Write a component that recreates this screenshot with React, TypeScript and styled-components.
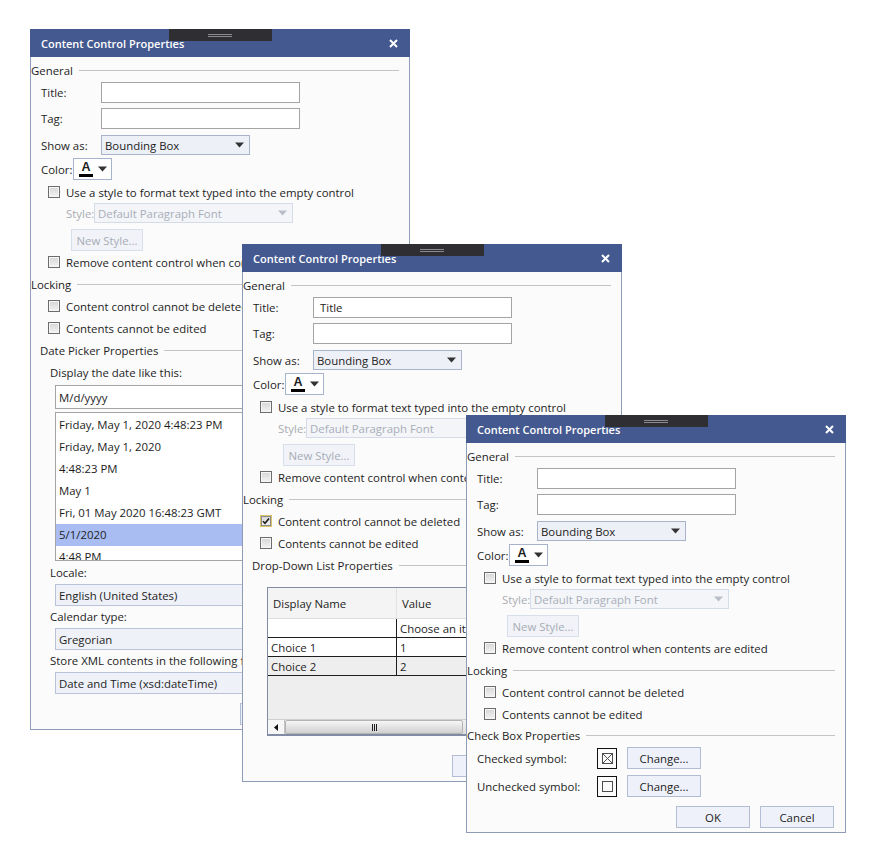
import React from 'react';
import styled, { createGlobalStyle } from 'styled-components';

const GlobalStyle = createGlobalStyle`
  html, body {
    margin: 0;
    padding: 0;
    background: #ffffff;
  }
  body {
    font-family: 'Open Sans', 'Noto Sans', sans-serif;
    font-size: 11.4px;
    color: #1d1d1d;
  }
`;

const Desktop = styled.div`
  position: relative;
  width: 873px;
  height: 862px;
  overflow: hidden;
  background: #ffffff;
`;

const Window = styled.div<{ $x: number; $y: number; $h: number; $z: number }>`
  position: absolute;
  left: ${(p) => p.$x}px;
  top: ${(p) => p.$y}px;
  z-index: ${(p) => p.$z};
  width: 380px;
  height: ${(p) => p.$h}px;
  box-sizing: border-box;
  border: 1px solid #8e9cb7;
  background: #fbfbfb;
  display: flex;
  flex-direction: column;
`;

const TitleBar = styled.div`
  flex: none;
  height: 28px;
  margin: -1px -1px 0;
  padding: 0 12px 0 11px;
  background: #44598f;
  color: #ffffff;
  display: flex;
  align-items: center;
  justify-content: space-between;
  font-size: 11px;
  font-weight: 600;
`;

const Grip = styled.div`
  position: absolute;
  left: 138px;
  top: -1px;
  width: 103px;
  height: 12px;
  background: #2f2f33;

  &::before,
  &::after {
    content: '';
    position: absolute;
    left: 39px;
    width: 24px;
    height: 1px;
    background: #8c8c8c;
  }
  &::before {
    top: 5px;
  }
  &::after {
    top: 7px;
  }
`;

const Body = styled.div`
  flex: 1;
  min-height: 0;
  display: flex;
  flex-direction: column;
  padding-top: 5px;
`;

const SectionHead = styled.div<{ $mt?: number; $indent?: number }>`
  display: flex;
  align-items: center;
  height: 16px;
  margin-top: ${(p) => p.$mt ?? 0}px;
  margin-right: 10px;
  padding-left: ${(p) => p.$indent ?? 0}px;
  white-space: nowrap;

  &::after {
    content: '';
    flex: 1;
    height: 1px;
    margin-left: 6px;
    background: #c4c4c4;
  }
`;

const FieldRow = styled.div<{ $mt: number; $indent?: number }>`
  display: flex;
  align-items: center;
  margin-top: ${(p) => p.$mt}px;
  padding-left: ${(p) => p.$indent ?? 10}px;
  white-space: nowrap;
`;

const FieldLabel = styled.span<{ $w?: number; $disabled?: boolean }>`
  flex: none;
  width: ${(p) => (p.$w ? `${p.$w}px` : 'auto')};
  color: ${(p) => (p.$disabled ? '#a9acb2' : 'inherit')};
`;

const TextBox = styled.div<{ $w: number; $h?: number }>`
  flex: none;
  width: ${(p) => p.$w}px;
  height: ${(p) => p.$h ?? 21}px;
  box-sizing: border-box;
  border: 1px solid #a4a4a4;
  background: #ffffff;
  display: flex;
  align-items: center;
  padding-left: 6px;
`;

const Select = styled.div<{ $w: number; $h?: number; $disabled?: boolean }>`
  flex: none;
  width: ${(p) => p.$w}px;
  height: ${(p) => p.$h ?? 20}px;
  box-sizing: border-box;
  border: 1px solid ${(p) => (p.$disabled ? '#d5dbe7' : '#a9b4cb')};
  background: ${(p) => (p.$disabled ? '#f3f5f9' : '#edf0f7')};
  color: ${(p) => (p.$disabled ? '#a9aeb8' : 'inherit')};
  display: flex;
  align-items: center;
  justify-content: space-between;
  padding: 0 5px 0 3px;
`;

const ColorButton = styled.div`
  flex: none;
  width: 39px;
  height: 22px;
  box-sizing: border-box;
  border: 1px solid #a7b3cc;
  background: #ffffff;
  display: flex;
  align-items: center;
  padding-left: 5px;
  gap: 5px;
`;

const ColorGlyph = styled.span`
  display: flex;
  flex-direction: column;
  align-items: center;
  width: 14px;
  font-family: 'Liberation Sans', sans-serif;
  font-weight: 700;
  font-size: 12.5px;
  line-height: 10px;
  margin-top: 1px;

  &::after {
    content: '';
    width: 14px;
    height: 3px;
    margin-top: 2px;
    background: #000000;
  }
`;

const CheckRow = styled.label<{ $mt: number }>`
  display: flex;
  align-items: center;
  gap: 6px;
  height: 18px;
  margin-top: ${(p) => p.$mt}px;
  padding-left: 17px;
  white-space: nowrap;
`;

const Box = styled.span<{ $focus?: boolean }>`
  flex: none;
  width: 12px;
  height: 12px;
  box-sizing: border-box;
  border: 1px solid ${(p) => (p.$focus ? '#d9c46a' : '#6c6c6c')};
  background: linear-gradient(#d6d6d6, #f3f3f3);
  box-shadow: inset 0 0 0 1px ${(p) => (p.$focus ? '#8a8a8a' : '#f6f6f6')};
  display: flex;
  align-items: center;
  justify-content: center;
`;

const PushButton = styled.div<{ $w?: number; $disabled?: boolean }>`
  flex: none;
  width: ${(p) => p.$w ?? 74}px;
  height: 22px;
  box-sizing: border-box;
  border: 1px solid ${(p) => (p.$disabled ? '#d8deea' : '#b2bcd3')};
  background: ${(p) => (p.$disabled ? '#f1f3f8' : '#eef1f9')};
  color: ${(p) => (p.$disabled ? '#a7acb6' : 'inherit')};
  display: flex;
  align-items: center;
  justify-content: center;
`;

const Footer = styled.div`
  margin-top: auto;
  display: flex;
  justify-content: flex-end;
  gap: 10px;
  padding: 0 11px 4px 0;
`;

const Stretch = styled.div<{ $mt: number; $h: number; $indent: number }>`
  margin: ${(p) => p.$mt}px 14px 0 ${(p) => p.$indent}px;
  height: ${(p) => p.$h}px;
  box-sizing: border-box;
  border: 1px solid #a4a4a4;
  background: #ffffff;
  display: flex;
  align-items: center;
  padding-left: 3px;
  white-space: nowrap;
`;

const WideSelect = styled(Stretch)`
  border-color: #b9c2d6;
  background: #eef1f8;
`;

const SubLabel = styled.div<{ $mt: number }>`
  height: 18px;
  line-height: 18px;
  margin-top: ${(p) => p.$mt}px;
  padding-left: 19px;
  white-space: nowrap;
`;

const ListBox = styled.div`
  margin: 3px 14px 0 24px;
  height: 149px;
  box-sizing: border-box;
  border: 1px solid #a4a4a4;
  background: #ffffff;
  padding-top: 1px;
  overflow: hidden;
`;

const ListItem = styled.div<{ $selected?: boolean }>`
  height: 22px;
  line-height: 22px;
  padding-left: 3px;
  white-space: nowrap;
  background: ${(p) => (p.$selected ? '#a9bdf3' : 'transparent')};
`;

const Grid = styled.div`
  margin: 14px 14px 0 24px;
  height: 149px;
  box-sizing: border-box;
  border: 1px solid #7f8ca3;
  border-bottom-width: 2px;
  background: #eeeeee;
  display: flex;
  flex-direction: column;
`;

const GridRow = styled.div<{ $head?: boolean; $alt?: boolean }>`
  flex: none;
  display: grid;
  grid-template-columns: 129px 1fr;
  height: ${(p) => (p.$head ? 30 : 18)}px;
  border-bottom: 1px solid ${(p) => (p.$head ? '#dedede' : '#1e1e1e')};
  background: ${(p) => (p.$head ? '#f4f4f4' : p.$alt ? '#eeeeee' : '#ffffff')};
`;

const GridCell = styled.div<{ $head?: boolean }>`
  display: flex;
  align-items: center;
  padding-left: ${(p) => (p.$head ? 5 : 3)}px;
  border-right: 1px solid ${(p) => (p.$head ? '#e2e2e2' : '#1e1e1e')};
  white-space: nowrap;
  overflow: hidden;
`;

const GridFill = styled.div`
  flex: 1;
`;

const HScroll = styled.div`
  flex: none;
  height: 14px;
  display: flex;
  background: linear-gradient(#f0f0f0, #dedede);
  border-top: 1px solid #cfcfcf;
`;

const ScrollArrow = styled.div`
  width: 16px;
  display: flex;
  align-items: center;
  justify-content: center;
  border-right: 1px solid #c2c2c2;
  background: #f6f6f6;
`;

const ScrollThumb = styled.div`
  width: 178px;
  box-sizing: border-box;
  border: 1px solid #b4b4b4;
  border-radius: 2px;
  background: linear-gradient(#f6f6f6, #d0d0d0);
  display: flex;
  align-items: center;
  justify-content: center;
  gap: 1px;
`;

const GripLine = styled.span`
  width: 1px;
  height: 7px;
  background: #1e1e1e;
`;

const SymbolBox = styled.div`
  flex: none;
  width: 20px;
  height: 21px;
  box-sizing: border-box;
  border: 1px solid #111111;
  display: flex;
  align-items: center;
  justify-content: center;
  margin-right: 10px;
`;

const Arrow = ({ color = '#333333' }: { color?: string }) => (
  <svg width="9" height="6" viewBox="0 0 9 6">
    <path d="M0 0.5h9L4.5 5.5z" fill={color} />
  </svg>
);

const CloseIcon = () => (
  <svg width="9" height="9" viewBox="0 0 9 9">
    <path d="M1 1l7 7M8 1l-7 7" stroke="#ffffff" strokeWidth="2" />
  </svg>
);

const Tick = () => (
  <svg width="8" height="8" viewBox="0 0 8 8">
    <path d="M1 4.2l2 2L7 1.5" stroke="#1b1b1b" strokeWidth="1.6" fill="none" />
  </svg>
);

const SymbolGlyph = ({ crossed }: { crossed?: boolean }) => (
  <svg width="11" height="11" viewBox="0 0 11 11">
    <rect x="0.5" y="0.5" width="10" height="10" fill="none" stroke="#4d4d4d" />
    {crossed && <path d="M1 1l9 9M10 1l-9 9" stroke="#4d4d4d" />}
  </svg>
);

type CommonProps = { title?: string; lockDelete?: boolean };

const CommonFields = ({ title = '', lockDelete = false }: CommonProps) => (
  <>
    <SectionHead>General</SectionHead>
    <FieldRow $mt={4}>
      <FieldLabel $w={60}>Title:</FieldLabel>
      <TextBox $w={199}>{title}</TextBox>
    </FieldRow>
    <FieldRow $mt={5}>
      <FieldLabel $w={60}>Tag:</FieldLabel>
      <TextBox $w={199} />
    </FieldRow>
    <FieldRow $mt={6}>
      <FieldLabel $w={60}>Show as:</FieldLabel>
      <Select $w={149}>
        Bounding Box
        <Arrow />
      </Select>
    </FieldRow>
    <FieldRow $mt={3}>
      <FieldLabel $w={32}>Color:</FieldLabel>
      <ColorButton>
        <ColorGlyph>A</ColorGlyph>
        <Arrow />
      </ColorButton>
    </FieldRow>
    <CheckRow $mt={3}>
      <Box />
      Use a style to format text typed into the empty control
    </CheckRow>
    <FieldRow $mt={2} $indent={35}>
      <FieldLabel $w={28} $disabled>
        Style:
      </FieldLabel>
      <Select $w={199} $disabled>
        Default Paragraph Font
        <Arrow color="#b9bec8" />
      </Select>
    </FieldRow>
    <FieldRow $mt={6} $indent={40}>
      <PushButton $w={72} $disabled>
        New Style...
      </PushButton>
    </FieldRow>
    <CheckRow $mt={2}>
      <Box />
      Remove content control when contents are edited
    </CheckRow>
    <SectionHead $mt={5}>Locking</SectionHead>
    <CheckRow $mt={5}>
      <Box $focus={lockDelete}>{lockDelete && <Tick />}</Box>
      Content control cannot be deleted
    </CheckRow>
    <CheckRow $mt={4}>
      <Box />
      Contents cannot be edited
    </CheckRow>
  </>
);

const dateFormats = [
  'Friday, May 1, 2020 4:48:23 PM',
  'Friday, May 1, 2020',
  '4:48:23 PM',
  'May 1',
  'Fri, 01 May 2020 16:48:23 GMT',
  '5/1/2020',
  '4:48 PM',
];

const choices = [
  { name: '', value: 'Choose an item.' },
  { name: 'Choice 1', value: '1' },
  { name: 'Choice 2', value: '2' },
];

type DialogProps = { x: number; y: number; h: number; z: number; children: React.ReactNode };

const Dialog = ({ x, y, h, z, children }: DialogProps) => (
  <Window $x={x} $y={y} $h={h} $z={z}>
    <TitleBar>
      <span>Content Control Properties</span>
      <CloseIcon />
    </TitleBar>
    <Grip />
    <Body>
      {children}
      <Footer>
        <PushButton>OK</PushButton>
        <PushButton>Cancel</PushButton>
      </Footer>
    </Body>
  </Window>
);

const App = () => {
  return (
    <Desktop>
      <GlobalStyle />

      <Dialog x={30} y={29} h={701} z={1}>
        <CommonFields />
        <SectionHead $mt={5} $indent={9}>
          Date Picker Properties
        </SectionHead>
        <SubLabel $mt={6}>Display the date like this:</SubLabel>
        <Stretch $mt={3} $h={24} $indent={24}>
          M/d/yyyy
        </Stretch>
        <ListBox>
          {dateFormats.map((f) => (
            <ListItem key={f} $selected={f === '5/1/2020'}>
              {f}
            </ListItem>
          ))}
        </ListBox>
        <SubLabel $mt={3}>Locale:</SubLabel>
        <WideSelect $mt={2} $h={22} $indent={24}>
          English (United States)
        </WideSelect>
        <SubLabel $mt={2}>Calendar type:</SubLabel>
        <WideSelect $mt={2} $h={22} $indent={24}>
          Gregorian
        </WideSelect>
        <SubLabel $mt={2}>Store XML contents in the following format when mapped:</SubLabel>
        <WideSelect $mt={2} $h={22} $indent={24}>
          Date and Time (xsd:dateTime)
        </WideSelect>
      </Dialog>

      <Dialog x={242} y={244} h={538} z={2}>
        <CommonFields title="Title" lockDelete />
        <SectionHead $mt={5} $indent={9}>
          Drop-Down List Properties
        </SectionHead>
        <Grid>
          <GridRow $head>
            <GridCell $head>Display Name</GridCell>
            <GridCell $head>Value</GridCell>
          </GridRow>
          {choices.map((c, i) => (
            <GridRow key={c.value} $alt={i === 2}>
              <GridCell>{c.name}</GridCell>
              <GridCell>{c.value}</GridCell>
            </GridRow>
          ))}
          <GridFill />
          <HScroll>
            <ScrollArrow>
              <svg width="4" height="7" viewBox="0 0 4 7">
                <path d="M4 0v7L0 3.5z" fill="#111111" />
              </svg>
            </ScrollArrow>
            <ScrollThumb>
              <GripLine />
              <GripLine />
              <GripLine />
            </ScrollThumb>
          </HScroll>
        </Grid>
      </Dialog>

      <Dialog x={466} y={415} h={418} z={3}>
        <CommonFields />
        <SectionHead $mt={4}>Check Box Properties</SectionHead>
        <FieldRow $mt={4}>
          <FieldLabel $w={120}>Checked symbol:</FieldLabel>
          <SymbolBox>
            <SymbolGlyph crossed />
          </SymbolBox>
          <PushButton>Change...</PushButton>
        </FieldRow>
        <FieldRow $mt={6}>
          <FieldLabel $w={120}>Unchecked symbol:</FieldLabel>
          <SymbolBox>
            <SymbolGlyph />
          </SymbolBox>
          <PushButton>Change...</PushButton>
        </FieldRow>
      </Dialog>
    </Desktop>
  );
};

export default App;
